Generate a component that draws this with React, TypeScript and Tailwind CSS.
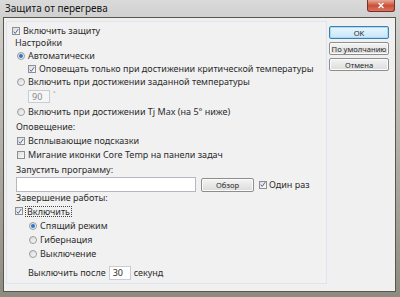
import React from 'react';

const font = { fontFamily: '"Noto Sans", "Open Sans", sans-serif' };

function Check({ checked = false }: { checked?: boolean }) {
  return (
    <span className="w-[8px] h-[8px] shrink-0 border border-[#8e8f8f] bg-gradient-to-br from-[#dcdcdc] to-[#fbfbfb] flex items-center justify-center">
      {checked && (
        <svg viewBox="0 0 8 8" className="w-[7px] h-[7px]">
          <path d="M1 4.2 L3 6.5 L7 0.8" fill="none" stroke="#3a5ea8" strokeWidth={1.2} />
        </svg>
      )}
    </span>
  );
}

function Radio({ checked = false }: { checked?: boolean }) {
  return (
    <span className="w-[8px] h-[8px] shrink-0 rounded-full border border-[#9a9b9b] bg-gradient-to-br from-[#d8d8d8] to-[#fafafa] flex items-center justify-center">
      {checked && <span className="w-[4px] h-[4px] rounded-full bg-[#3174c8]" />}
    </span>
  );
}

function Row({ children, className = '' }: { children: React.ReactNode; className?: string }) {
  return <div className={`flex items-center gap-[3px] h-[10px] ${className}`}>{children}</div>;
}

function Btn({ children, primary = false, className = '' }: { children: React.ReactNode; primary?: boolean; className?: string }) {
  return (
    <div
      className={`flex items-center justify-center whitespace-nowrap leading-[10px] rounded-[2px] border text-[7.6px] text-[#2a2a2a] ${
        primary
          ? 'border-[#3c7fb1] bg-gradient-to-b from-[#eaf6fd] to-[#c6e5f7] shadow-[inset_0_0_0_1px_#a9daf5]'
          : 'border-[#8e8e8e] bg-gradient-to-b from-[#f4f4f4] to-[#dcdcdc] shadow-[inset_0_0_0_1px_#fbfbfb]'
      } ${className}`}
    >
      {children}
    </div>
  );
}

export default function App() {
  return (
    <div className="w-[400px] h-[297px] relative flex flex-col bg-gradient-to-b from-[#d4d4d2] to-[#8e8b80] overflow-hidden" style={font}>
      {/* title bar */}
      <div className="h-[17px] shrink-0 bg-gradient-to-b from-[#dadada] to-[#d0d0d0] flex items-center pl-[5px] pb-[1px] text-[10px] leading-[12px] text-[#151515]">
        Защита от перегрева
      </div>
      <div className="absolute top-0 right-[5px] w-[28px] h-[12px] rounded-b-[3px] border border-t-0 border-[#7a3026] bg-gradient-to-b from-[#e9a897] via-[#c95039] to-[#d9745c] flex items-center justify-center">
        <svg viewBox="0 0 10 8" className="w-[8px] h-[7px]">
          <path d="M2 1 L8 7 M8 1 L2 7" stroke="#fff" strokeWidth={1.8} />
        </svg>
      </div>

      {/* client */}
      <div className="flex-1 flex pl-[3px] pr-[4px] pb-[5px]">
        <div className="flex-1 flex bg-[#f0f0f0] border border-[#5a564c] pt-[3px] pl-[2px] pb-[7px] text-[9px] leading-[10px] text-[#2c2c2c]">
          {/* main panel */}
          <div className="w-[321px] border border-[#dfe5ec] bg-[#f1f1f1] pl-[5px] pt-[4px] flex flex-col">
            <Row>
              <Check checked />
              <span>Включить защиту</span>
            </Row>
            <div className="pl-[3px] mt-[2px] h-[10px] flex items-center">Настройки</div>
            <Row className="pl-[5px] mt-[3px]">
              <Radio checked />
              <span>Автоматически</span>
            </Row>
            <Row className="pl-[16px] mt-[3px]">
              <Check checked />
              <span>Оповещать только при достижении критической температуры</span>
            </Row>
            <Row className="pl-[5px] mt-[3px]">
              <Radio />
              <span>Включить при достижении заданной температуры</span>
            </Row>
            <div className="pl-[16px] mt-[3px] flex items-start gap-[3px]">
              <div className="w-[22px] h-[13px] border border-[#c9cdd2] bg-[#f6f6f6] text-[#8a8a8a] flex items-center pl-[3px]">90</div>
              <span className="text-[6px] text-[#888] leading-none">°</span>
            </div>
            <Row className="pl-[5px] mt-[4px]">
              <Radio />
              <span>Включить при достижении Tj Max (на 5° ниже)</span>
            </Row>
            <div className="pl-[4px] mt-[5px] h-[10px] flex items-center">Оповещение:</div>
            <Row className="pl-[5px] mt-[4px]">
              <Check checked />
              <span>Всплывающие подсказки</span>
            </Row>
            <Row className="pl-[5px] mt-[4px]">
              <Check />
              <span>Мигание иконки Core Temp на панели задач</span>
            </Row>
            <div className="pl-[4px] mt-[5px] h-[10px] flex items-center">Запустить программу:</div>
            <div className="flex items-center mt-[2px] pl-[4px]">
              <div className="w-[180px] h-[15px] border border-[#b5b8bf] bg-white" />
              <Btn className="ml-[5px] w-[53px] h-[14px]">Обзор</Btn>
              <div className="ml-[5px] flex items-center gap-[2px]">
                <Check checked />
                <span>Один раз</span>
              </div>
            </div>
            <div className="pl-[4px] mt-[1px] h-[10px] flex items-center">Завершение работы:</div>
            <Row className="pl-[3px] mt-[3px]">
              <Check checked />
              <span className="outline outline-1 outline-dotted outline-[#444] px-[1px] leading-[9px]">Включить</span>
            </Row>
            <Row className="pl-[17px] mt-[5px]">
              <Radio checked />
              <span>Спящий режим</span>
            </Row>
            <Row className="pl-[17px] mt-[4px]">
              <Radio />
              <span>Гибернация</span>
            </Row>
            <Row className="pl-[17px] mt-[4px]">
              <Radio />
              <span>Выключение</span>
            </Row>
            <div className="pl-[16px] mt-[7px] flex items-center gap-[3px]">
              <span>Выключить после</span>
              <div className="w-[22px] h-[14px] border border-[#c9cdd2] bg-white flex items-center pl-[3px]">30</div>
              <span>секунд</span>
            </div>
          </div>

          {/* buttons */}
          <div className="flex flex-col gap-[3px] ml-[2px] pt-[5px]">
            <Btn primary className="w-[60px] h-[13px]">OK</Btn>
            <Btn className="w-[60px] h-[13px]">По умолчанию</Btn>
            <Btn className="w-[60px] h-[13px]">Отмена</Btn>
          </div>
        </div>
      </div>
    </div>
  );
}
